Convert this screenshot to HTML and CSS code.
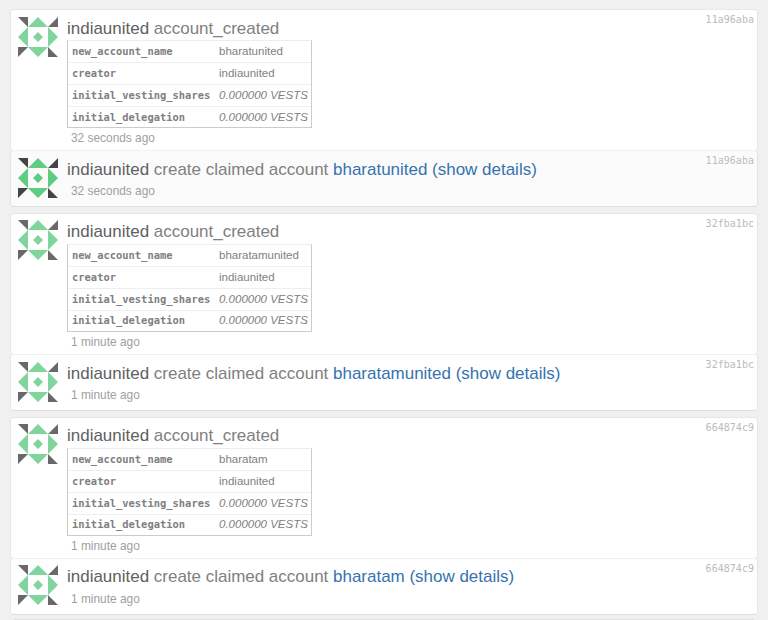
FILE: index.html
```
<!DOCTYPE html>
<html lang="en">
  <head>
    <meta charset="UTF-8" />
    <meta name="viewport" content="width=device-width, initial-scale=1.0" />
    <title>Operations</title>
    <link rel="stylesheet" href="styles.css">
  </head>
  <body>
    <svg class="defs" width="0" height="0">
      <symbol id="avatar" viewBox="0 0 40 40">
        <path class="corner" d="M0 0H10V10ZM40 0V10H30ZM0 30H10L0 40ZM30 30L40 40H30Z" />
        <path class="gem" d="M20 0L30 10H10ZM40 20L30 30V10ZM20 40L10 30H30ZM0 20L10 10V30ZM20 15L25 20L20 25L15 20Z" />
      </symbol>
    </svg>
    <div class="feed">
      <div class="block">
        <div class="op tall">
          <svg class="avatar"><use href="#avatar" /></svg>
          <div class="content">
            <div class="title"><span class="user">indiaunited</span> account_created</div>
            <table class="details">
              <tr><th>new_account_name</th><td>bharatunited</td></tr>
              <tr><th>creator</th><td>indiaunited</td></tr>
              <tr><th>initial_vesting_shares</th><td><i>0.000000 VESTS</i></td></tr>
              <tr><th>initial_delegation</th><td><i>0.000000 VESTS</i></td></tr>
            </table>
            <div class="time">32 seconds ago</div>
          </div>
          <span class="hash">11a96aba</span>
        </div>
        <div class="op short active">
          <svg class="avatar"><use href="#avatar" /></svg>
          <div class="content">
            <div class="title"><span class="user">indiaunited</span> create claimed account <a>bharatunited</a> <a>(show details)</a></div>
            <div class="time">32 seconds ago</div>
          </div>
          <span class="hash">11a96aba</span>
        </div>
      </div>

      <div class="block">
        <div class="op tall">
          <svg class="avatar"><use href="#avatar" /></svg>
          <div class="content">
            <div class="title"><span class="user">indiaunited</span> account_created</div>
            <table class="details">
              <tr><th>new_account_name</th><td>bharatamunited</td></tr>
              <tr><th>creator</th><td>indiaunited</td></tr>
              <tr><th>initial_vesting_shares</th><td><i>0.000000 VESTS</i></td></tr>
              <tr><th>initial_delegation</th><td><i>0.000000 VESTS</i></td></tr>
            </table>
            <div class="time">1 minute ago</div>
          </div>
          <span class="hash">32fba1bc</span>
        </div>
        <div class="op short">
          <svg class="avatar"><use href="#avatar" /></svg>
          <div class="content">
            <div class="title"><span class="user">indiaunited</span> create claimed account <a>bharatamunited</a> <a>(show details)</a></div>
            <div class="time">1 minute ago</div>
          </div>
          <span class="hash">32fba1bc</span>
        </div>
      </div>

      <div class="block">
        <div class="op tall">
          <svg class="avatar"><use href="#avatar" /></svg>
          <div class="content">
            <div class="title"><span class="user">indiaunited</span> account_created</div>
            <table class="details">
              <tr><th>new_account_name</th><td>bharatam</td></tr>
              <tr><th>creator</th><td>indiaunited</td></tr>
              <tr><th>initial_vesting_shares</th><td><i>0.000000 VESTS</i></td></tr>
              <tr><th>initial_delegation</th><td><i>0.000000 VESTS</i></td></tr>
            </table>
            <div class="time">1 minute ago</div>
          </div>
          <span class="hash">664874c9</span>
        </div>
        <div class="op short">
          <svg class="avatar"><use href="#avatar" /></svg>
          <div class="content">
            <div class="title"><span class="user">indiaunited</span> create claimed account <a>bharatam</a> <a>(show details)</a></div>
            <div class="time">1 minute ago</div>
          </div>
          <span class="hash">664874c9</span>
        </div>
      </div>

      <div class="next"></div>
    </div>
  </body>
</html>
```
FILE: styles.css
```
* {
  box-sizing: border-box;
}
body {
  margin: 0;
  background-color: #f0f0f0;
  font-family: "Liberation Sans", Arial, sans-serif;
  color: #808080;
}
.defs {
  display: none;
}
.feed {
  height: 620px;
  padding: 9px 10px 0;
}
.block {
  width: 748px;
  height: 198px;
  margin-bottom: 5.8px;
}
.op {
  display: flex;
  align-items: flex-start;
  padding: 6.5px 3px 0 7px;
  border: 1px solid #e6e6e6;
  border-radius: 4px;
  background-color: white;
}
.op.tall {
  height: 141.3px;
  border-bottom: none;
}
.op.short {
  height: 56.7px;
  border-top-color: #f0f0f0;
  border-bottom-color: #dedede;
}
.op.active {
  background-color: #fbfbfb;
}
/* top edge of the following block */
.next {
  width: 740px;
  height: 1px;
  margin: -1.4px 4px 0;
  background-color: #e0e0e0;
}
.avatar {
  width: 40px;
  height: 40px;
  flex: none;
  opacity: 0.8;
}
.active .avatar {
  opacity: 1;
}
.corner {
  fill: #444;
}
.gem {
  fill: #60cb83;
}
.content {
  flex: 1;
  margin-left: 9px;
}
.title {
  height: 23.7px;
  font-size: 16.98px;
  line-height: 23px;
  white-space: nowrap;
}
.user {
  color: #606060;
}
a {
  color: #3572b0;
}
.details {
  width: 245px;
  height: 88px;
  border-collapse: separate;
  border-spacing: 0;
  border: 1px solid #ccc;
  border-top-color: #eee;
  table-layout: fixed;
  font-size: 11.5px;
}
.details th,
.details td {
  height: 22px;
  padding: 0 0 0 4px;
  line-height: 19px;
  text-align: left;
  white-space: nowrap;
}
.details tr:first-child th,
.details tr:last-child th,
.details tr:first-child td,
.details tr:last-child td {
  height: 21px;
}
.details th {
  width: 147px;
  font-family: "DejaVu Sans Mono", monospace;
  font-size: 10.45px;
}
.details tr + tr th,
.details tr + tr td {
  border-top: 1px solid #eee;
}
.time {
  margin-left: 4px;
  font-size: 11.9px;
  line-height: 20px;
  color: #a0a0a0;
}
.hash {
  margin-top: -3.5px;
  font-family: "DejaVu Sans Mono", monospace;
  font-size: 10.05px;
  line-height: 14px;
  color: #bbb;
}
```
